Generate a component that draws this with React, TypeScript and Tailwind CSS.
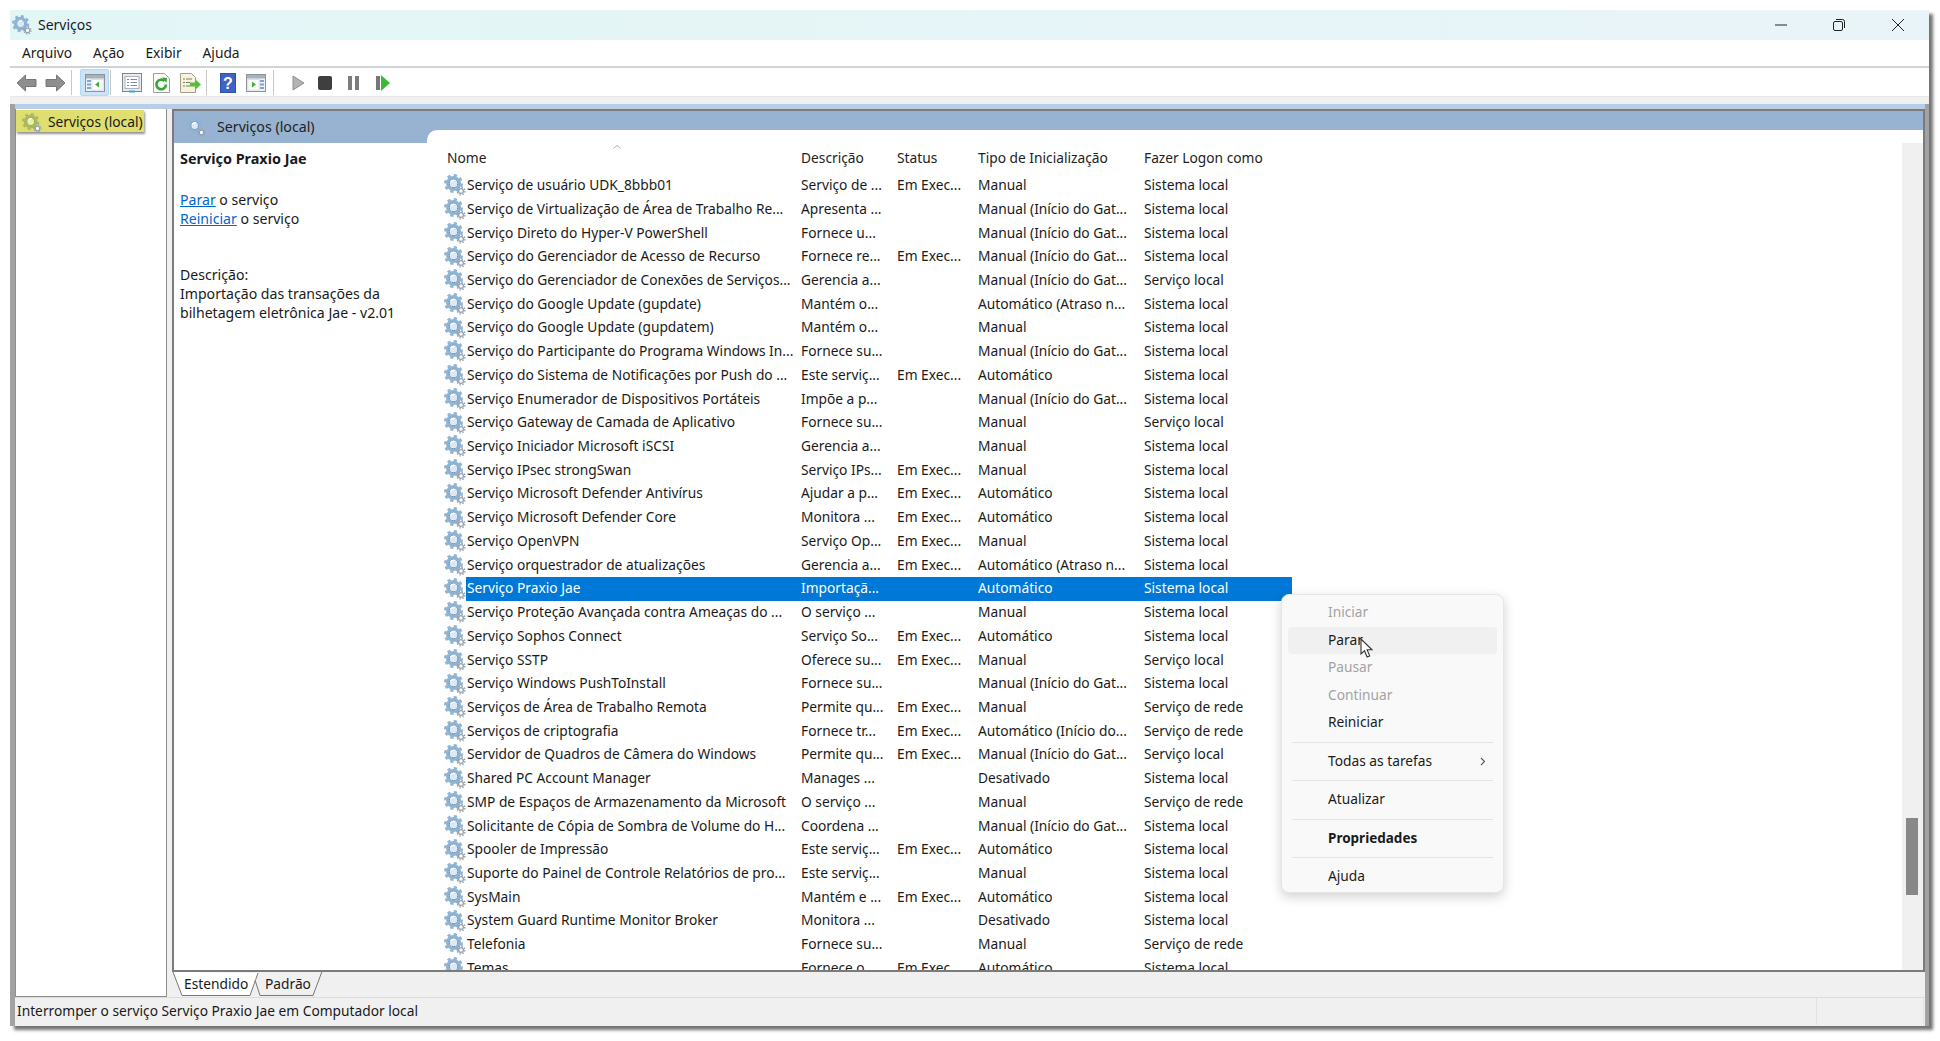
import React from "react";

type Row = [string, string, string, string, string];

const rows: Row[] = [
  ["Serviço de usuário UDK_8bbb01", "Serviço de ...", "Em Exec...", "Manual", "Sistema local"],
  ["Serviço de Virtualização de Área de Trabalho Re...", "Apresenta ...", "", "Manual (Início do Gat...", "Sistema local"],
  ["Serviço Direto do Hyper-V PowerShell", "Fornece u...", "", "Manual (Início do Gat...", "Sistema local"],
  ["Serviço do Gerenciador de Acesso de Recurso", "Fornece re...", "Em Exec...", "Manual (Início do Gat...", "Sistema local"],
  ["Serviço do Gerenciador de Conexões de Serviços...", "Gerencia a...", "", "Manual (Início do Gat...", "Serviço local"],
  ["Serviço do Google Update (gupdate)", "Mantém o...", "", "Automático (Atraso n...", "Sistema local"],
  ["Serviço do Google Update (gupdatem)", "Mantém o...", "", "Manual", "Sistema local"],
  ["Serviço do Participante do Programa Windows In...", "Fornece su...", "", "Manual (Início do Gat...", "Sistema local"],
  ["Serviço do Sistema de Notificações por Push do ...", "Este serviç...", "Em Exec...", "Automático", "Sistema local"],
  ["Serviço Enumerador de Dispositivos Portáteis", "Impõe a p...", "", "Manual (Início do Gat...", "Sistema local"],
  ["Serviço Gateway de Camada de Aplicativo", "Fornece su...", "", "Manual", "Serviço local"],
  ["Serviço Iniciador Microsoft iSCSI", "Gerencia a...", "", "Manual", "Sistema local"],
  ["Serviço IPsec strongSwan", "Serviço IPs...", "Em Exec...", "Manual", "Sistema local"],
  ["Serviço Microsoft Defender Antivírus", "Ajudar a p...", "Em Exec...", "Automático", "Sistema local"],
  ["Serviço Microsoft Defender Core", "Monitora ...", "Em Exec...", "Automático", "Sistema local"],
  ["Serviço OpenVPN", "Serviço Op...", "Em Exec...", "Manual", "Sistema local"],
  ["Serviço orquestrador de atualizações", "Gerencia a...", "Em Exec...", "Automático (Atraso n...", "Sistema local"],
  ["Serviço Praxio Jae", "Importaçã...", "", "Automático", "Sistema local"],
  ["Serviço Proteção Avançada contra Ameaças do ...", "O serviço ...", "", "Manual", "Sistema local"],
  ["Serviço Sophos Connect", "Serviço So...", "Em Exec...", "Automático", "Sistema local"],
  ["Serviço SSTP", "Oferece su...", "Em Exec...", "Manual", "Serviço local"],
  ["Serviço Windows PushToInstall", "Fornece su...", "", "Manual (Início do Gat...", "Sistema local"],
  ["Serviços de Área de Trabalho Remota", "Permite qu...", "Em Exec...", "Manual", "Serviço de rede"],
  ["Serviços de criptografia", "Fornece tr...", "Em Exec...", "Automático (Início do...", "Serviço de rede"],
  ["Servidor de Quadros de Câmera do Windows", "Permite qu...", "Em Exec...", "Manual (Início do Gat...", "Serviço local"],
  ["Shared PC Account Manager", "Manages ...", "", "Desativado", "Sistema local"],
  ["SMP de Espaços de Armazenamento da Microsoft", "O serviço ...", "", "Manual", "Serviço de rede"],
  ["Solicitante de Cópia de Sombra de Volume do H...", "Coordena ...", "", "Manual (Início do Gat...", "Sistema local"],
  ["Spooler de Impressão", "Este serviç...", "Em Exec...", "Automático", "Sistema local"],
  ["Suporte do Painel de Controle Relatórios de pro...", "Este serviç...", "", "Manual", "Sistema local"],
  ["SysMain", "Mantém e ...", "Em Exec...", "Automático", "Sistema local"],
  ["System Guard Runtime Monitor Broker", "Monitora ...", "", "Desativado", "Sistema local"],
  ["Telefonia", "Fornece su...", "", "Manual", "Serviço de rede"],
  ["Temas", "Fornece o...", "Em Exec...", "Automático", "Sistema local"],
];

function Gear({ size = 22, tint = "blue" }: { size?: number; tint?: "blue" | "green" }) {
  const main = tint === "blue" ? "#8fb3d2" : "#a9ba5e";
  const dark = tint === "blue" ? "#6e95b8" : "#86994a";
  const light = tint === "blue" ? "#dce9f5" : "#ecefa8";
  return (
    <svg width={size} height={size} viewBox="0 0 22 22" className="shrink-0">
      <circle cx="9.5" cy="9.5" r="8.2" fill="none" stroke={main} strokeWidth="2.6" strokeDasharray="3.2 3.24" />
      <circle cx="9.5" cy="9.5" r="6" fill="none" stroke={main} strokeWidth="3" />
      <circle cx="9.5" cy="9.5" r="4.2" fill="none" stroke={dark} strokeWidth="1" />
      <circle cx="9.5" cy="9.5" r="3.6" fill={light} />
      <path d="M7 8a3 3 0 0 1 4-1.5" fill="none" stroke="#fff" strokeWidth="1.4" />
      <circle cx="17" cy="17" r="3.9" fill="none" stroke="#93a2ae" strokeWidth="1.4" strokeDasharray="1.5 1.55" />
      <circle cx="17" cy="17" r="2.4" fill="#fff" stroke="#93a2ae" strokeWidth="1.3" />
    </svg>
  );
}

function WinIcon({ green }: { green: "left" | "right" }) {
  return (
    <svg width="20" height="18" viewBox="0 0 20 18" className="shrink-0">
      <rect x="0.5" y="0.5" width="19" height="17" fill="#eef1f3" stroke="#8b949c" />
      <rect x="1" y="1" width="18" height="3.5" fill="#aab2ba" />
      {green === "left" ? (
        <>
          <rect x="2" y="6" width="4" height="2" fill="#7fa6d0" />
          <rect x="2" y="9.5" width="4" height="2" fill="#7fa6d0" />
          <rect x="2" y="13" width="4" height="2" fill="#7fa6d0" />
          <rect x="7" y="5.5" width="11" height="10.5" fill="#fff" stroke="#c3c9ce" strokeWidth="0.5" />
          <path d="M14 7.5v6L10 10.5z" fill="#3fb23a" />
        </>
      ) : (
        <>
          <rect x="14" y="6" width="4" height="2" fill="#7fa6d0" />
          <rect x="14" y="9.5" width="4" height="2" fill="#7fa6d0" />
          <rect x="14" y="13" width="4" height="2" fill="#7fa6d0" />
          <rect x="2" y="5.5" width="11" height="10.5" fill="#fff" stroke="#c3c9ce" strokeWidth="0.5" />
          <path d="M6 7.5v6l4-3z" fill="#3fb23a" />
        </>
      )}
    </svg>
  );
}

function Toolbar() {
  const sep = "w-px h-[25px] bg-[#c8c8c8] shrink-0";
  return (
    <div className="h-[28px] flex items-center bg-white pl-[6px] pt-[1px] shrink-0">
      <svg width="21" height="18" viewBox="0 0 21 18" className="shrink-0">
        <path d="M9.5 1 1 9l8.5 8v-4.5H20v-7H9.5z" fill="#8d8f8f" stroke="#777" />
      </svg>
      <svg width="21" height="18" viewBox="0 0 21 18" className="shrink-0 ml-[8px]">
        <path d="M11.5 1 20 9l-8.5 8v-4.5H1v-7h10.5z" fill="#8d8f8f" stroke="#777" />
      </svg>
      <div className={sep + " ml-[5px]"} />
      <div className="w-[29px] h-[27px] ml-[8px] rounded-[2px] bg-[#cce4f7] border border-[#b5d8f3] flex items-center justify-center shrink-0">
        <WinIcon green="left" />
      </div>
      <div className={sep + " ml-[1px]"} />
      <svg width="20" height="20" viewBox="0 0 20 20" className="shrink-0 ml-[11px]">
        <rect x="0.5" y="0.5" width="19" height="18" fill="#e8ecef" stroke="#7d868d" />
        <rect x="3" y="3.5" width="14" height="12" fill="#fff" stroke="#aab2ba" />
        <path d="M5 6.5h2M8.5 6.5h6.5M5 9.5h2M8.5 9.5h6.5M5 12.5h2M8.5 12.5h6.5" stroke="#7c8b99" />
        <rect x="7" y="17.5" width="6" height="2" fill="#38a8e8" />
      </svg>
      <svg width="17" height="20" viewBox="0 0 17 20" className="shrink-0 ml-[11px]">
        <path d="M.5.5h11l5 5v14H.5z" fill="#fbfbf6" stroke="#9aa0a4" />
        <path d="M13 11.5a4.8 4.8 0 1 1-1.5-3.5" fill="none" stroke="#37a53b" strokeWidth="2.6" />
        <path d="M9 4.5l5 .5-.5 5z" fill="#37a53b" />
      </svg>
      <svg width="21" height="20" viewBox="0 0 21 20" className="shrink-0 ml-[10px]">
        <path d="M.5.5h11l4 4v15H.5z" fill="#f8f3d8" stroke="#a3a08a" />
        <path d="M3 6h2M6 6h6M3 9.5h2M6 9.5h4M3 13h2M6 13h4" stroke="#7b7b70" />
        <path d="M10 9.5h5V6l6 5.5-6 5.5v-3.5h-5z" fill="#57bd3f" />
      </svg>
      <div className={sep + " ml-[5px]"} />
      <svg width="16" height="20" viewBox="0 0 16 20" className="shrink-0 ml-[13px]">
        <rect width="16" height="20" fill="#2d51ad" />
        <rect x="1" y="1" width="14" height="18" fill="#3f63c4" />
        <text x="8" y="16" textAnchor="middle" fontSize="16" fontWeight="700" fill="#fff" fontFamily="Liberation Sans, sans-serif">?</text>
      </svg>
      <div className="ml-[10px] flex">
        <WinIcon green="right" />
      </div>
      <div className={sep + " ml-[7px]"} />
      <svg width="13" height="16" viewBox="0 0 13 16" className="shrink-0 ml-[18px]">
        <path d="M1 1l11 7-11 7z" fill="#b3b3b3" stroke="#909090" />
      </svg>
      <div className="w-[14px] h-[14px] rounded-[2px] bg-[#3f3f3f] ml-[13px] shrink-0" />
      <div className="ml-[16px] flex gap-[3px] shrink-0">
        <div className="w-[4px] h-[14px] bg-[#7c7c7c]" />
        <div className="w-[4px] h-[14px] bg-[#7c7c7c]" />
      </div>
      <div className="ml-[17px] flex items-center gap-[1px] shrink-0">
        <div className="w-[4px] h-[14px] bg-[#777]" />
        <svg width="9" height="16" viewBox="0 0 9 16">
          <path d="M0 0l9 8-9 8z" fill="#3fb73a" />
        </svg>
      </div>
    </div>
  );
}

function ListRow({ row, selected }: { row: Row; selected: boolean }) {
  const cell = "overflow-hidden whitespace-nowrap shrink-0";
  return (
    <div className="h-[23.73px] flex items-center pl-[17px] shrink-0">
      <div className="w-[22px] shrink-0 flex items-center">
        <Gear />
      </div>
      <div className={"flex items-center h-full w-[826px] shrink-0 " + (selected ? "bg-[#0078d7] text-white" : "text-[#1a1a1a]")}>
        <div className={cell + " w-[335px] pl-[1px]"}>{row[0]}</div>
        <div className={cell + " w-[96px]"}>{row[1]}</div>
        <div className={cell + " w-[81px]"}>{row[2]}</div>
        <div className={cell + " w-[166px]"}>{row[3]}</div>
        <div className={cell + " w-[148px]"}>{row[4]}</div>
      </div>
    </div>
  );
}

function MenuItem({ label, disabled, bold, hover, arrow }: { label: string; disabled?: boolean; bold?: boolean; hover?: boolean; arrow?: boolean }) {
  return (
    <div className={"h-[27.5px] mx-[6px] rounded-[4px] pl-[40px] pr-[11px] flex items-center justify-between " + (hover ? "bg-[#f0f0f0] " : "") + (disabled ? "text-[#a3a3a3] " : "text-[#1b1b1b] ") + (bold ? "font-bold text-[13.5px]" : "")}>
      <span>{label}</span>
      {arrow && (
        <svg width="6" height="9" viewBox="0 0 6 9">
          <path d="M1 1l3.5 3.5L1 8" fill="none" stroke="#555" strokeWidth="1.1" />
        </svg>
      )}
    </div>
  );
}

function MenuSep() {
  return (
    <div className="h-[11px] flex items-center mx-[10px]">
      <div className="h-px w-full bg-[#e4e4e4]" />
    </div>
  );
}

export default function App() {
  return (
    <div className="relative w-[1940px] h-[1041px] bg-white overflow-hidden pt-[10px] pl-[10px] text-[13.75px] text-[#1a1a1a] font-['Noto_Sans',sans-serif]">
      <div className="w-[1919px] h-[1016px] flex flex-col bg-[#f0f0f0] shadow-[4px_4px_3px_rgba(70,70,70,0.75)]">
        {/* barra de titulo */}
        <div className="h-[30px] bg-gradient-to-r from-[#e3f6f6] to-[#e9f4f8] flex items-center pl-[2px] pb-[1px] shrink-0">
          <Gear size={20} />
          <span className="ml-[6px] text-[14px]">Serviços</span>
          <div className="ml-auto flex items-center">
            <svg width="12" height="12" viewBox="0 0 12 12" className="mr-[46px]">
              <path d="M0 6h12" stroke="#222" />
            </svg>
            <svg width="12" height="12" viewBox="0 0 12 12" className="mr-[47px]">
              <rect x=".5" y="2.5" width="9" height="9" rx="1.5" fill="none" stroke="#222" />
              <path d="M3 .5h6.5a2 2 0 0 1 2 2V9" fill="none" stroke="#222" />
            </svg>
            <svg width="12" height="12" viewBox="0 0 12 12" className="mr-[25px]">
              <path d="M0 0l12 12M12 0L0 12" stroke="#222" />
            </svg>
          </div>
        </div>
        {/* menu */}
        <div className="h-[28px] bg-white border-b-2 border-[#d0d3d6] flex items-center pl-[12px] pt-[1px] gap-[21px] shrink-0">
          <span>Arquivo</span>
          <span>Ação</span>
          <span>Exibir</span>
          <span>Ajuda</span>
        </div>
        <Toolbar />
        <div className="h-[8px] bg-[#f0f0f0] border-t border-[#e8e8e8] shrink-0" />
        {/* corpo + status, com a borda cinza da janela */}
        <div className="flex-1 min-h-0 flex flex-col border-l-[5px] border-r-[4px] border-[#a2a2a2]">
          <div className="h-[5px] bg-[#b6cee6] shrink-0" />
          <div className="h-[888px] shrink-0 flex">
            <div className="w-[152px] shrink-0 bg-white border-x border-b border-[#8e8e8e] h-[888px]">
              <div className="w-[128px] h-[22px] mt-[1px] bg-[#dfde6e] shadow-[1px_2px_2px_rgba(60,60,60,0.55)] flex items-center pl-[6px] pt-[3px] gap-[6px]">
                <Gear size={20} tint="green" />
                <span className="whitespace-nowrap">Serviços (local)</span>
              </div>
            </div>
            <div className="flex-1 min-w-0 flex flex-col pl-[5px]">
              {/* painel direito */}
              <div className="h-[863px] flex flex-col bg-white border-t-2 border-l-2 border-r-2 border-b-2 border-[#7b7b7b] shrink-0 overflow-hidden">
                <div className="h-[32px] bg-[#98b3d1] flex shrink-0">
                  <div className="flex items-center pl-[12px] gap-[11px] w-[253px] shrink-0">
                    <Gear size={20} />
                    <span className="text-[14.2px] text-[#222]">Serviços (local)</span>
                  </div>
                  <div className="flex-1 self-end h-[13px] bg-white rounded-tl-[10px]" />
                </div>
                <div className="flex-1 min-h-0 flex">
                  <div className="w-[253px] shrink-0 pl-[6px] pt-[6px] leading-[19px] text-[14.1px]">
                    <div className="font-bold h-[19px] text-[14.4px]">Serviço Praxio Jae</div>
                    <div className="mt-[22px]">
                      <span className="text-[#0066cc] underline">Parar</span> o serviço
                    </div>
                    <div>
                      <span className="text-[#0066cc] underline">Reiniciar</span> o serviço
                    </div>
                    <div className="mt-[37px]">Descrição:</div>
                    <div>Importação das transações da</div>
                    <div>bilhetagem eletrônica Jae - v2.01</div>
                  </div>
                  <div className="flex-1 min-w-0 flex flex-col overflow-hidden relative">
                    <div className="h-[30.6px] shrink-0 flex items-center pl-[20px] pt-[1px] text-[#222] relative">
                      <div className="w-[354px] shrink-0">Nome</div>
                      <div className="w-[96px] shrink-0">Descrição</div>
                      <div className="w-[81px] shrink-0">Status</div>
                      <div className="w-[166px] shrink-0">Tipo de Inicialização</div>
                      <div className="w-[148px] shrink-0">Fazer Logon como</div>
                      <svg width="8" height="4" viewBox="0 0 8 4" className="absolute left-[186px] top-[2px]">
                        <path d="M.5 3.5 4 .5l3.5 3" fill="none" stroke="#aaa" />
                      </svg>
                    </div>
                    <div className="flex-1 min-h-0 overflow-hidden flex flex-col">
                      {rows.map((row, i) => (
                        <ListRow key={row[0]} row={row} selected={i === 17} />
                      ))}
                    </div>
                    <div className="absolute right-0 top-0 bottom-0 w-[21px] bg-[#f0f0f0]">
                      <div className="absolute left-[4px] top-[675px] w-[12px] h-[77px] bg-[#888]" />
                    </div>
                  </div>
                </div>
              </div>
              {/* abas */}
              <div className="h-[25px] shrink-0 relative flex pl-[12px] pt-[2px]">
                <svg width="155" height="25" viewBox="0 0 155 25" className="absolute left-0 top-0">
                  <path d="M1 0l9 23.5h68L86 1" fill="#fff" stroke="#777" />
                  <path d="M83 8l5 15.5h53l9-24" fill="#f0f0f0" stroke="#777" />
                </svg>
                <span className="relative w-[81px]">Estendido</span>
                <span className="relative">Padrão</span>
              </div>
            </div>
          </div>
          {/* status */}
          <div className="flex-1 min-h-0 border-t border-[#dcdcdc] flex items-center pl-[2px] pb-[1px] bg-[#f0f0f0]">
            <span className="flex-1">Interromper o serviço Serviço Praxio Jae em Computador local</span>
            <div className="w-px h-full bg-[#e2e2e2] mr-[106px]" />
            <div className="w-px h-full bg-[#e2e2e2] mr-[1px]" />
          </div>
        </div>
      </div>

      {/* menu de contexto */}
      <div className="absolute left-[1281px] top-[594px] w-[223px] h-[299px] bg-[#f9f9f9] rounded-[8px] border border-[#e6e6e6] shadow-[0_4px_12px_rgba(0,0,0,0.18)] pt-[4px]">
        <MenuItem label="Iniciar" disabled />
        <MenuItem label="Parar" hover />
        <MenuItem label="Pausar" disabled />
        <MenuItem label="Continuar" disabled />
        <MenuItem label="Reiniciar" />
        <MenuSep />
        <MenuItem label="Todas as tarefas" arrow />
        <MenuSep />
        <MenuItem label="Atualizar" />
        <MenuSep />
        <MenuItem label="Propriedades" bold />
        <MenuSep />
        <MenuItem label="Ajuda" />
      </div>
      {/* cursor */}
      <svg width="14" height="21" viewBox="0 0 14 21" className="absolute left-[1360px] top-[638px]">
        <path d="M1 1v15l3.5-3.3 2.6 6.3 2.6-1.1-2.6-6.1H12z" fill="#fff" stroke="#333" strokeWidth="1.1" />
      </svg>
    </div>
  );
}
